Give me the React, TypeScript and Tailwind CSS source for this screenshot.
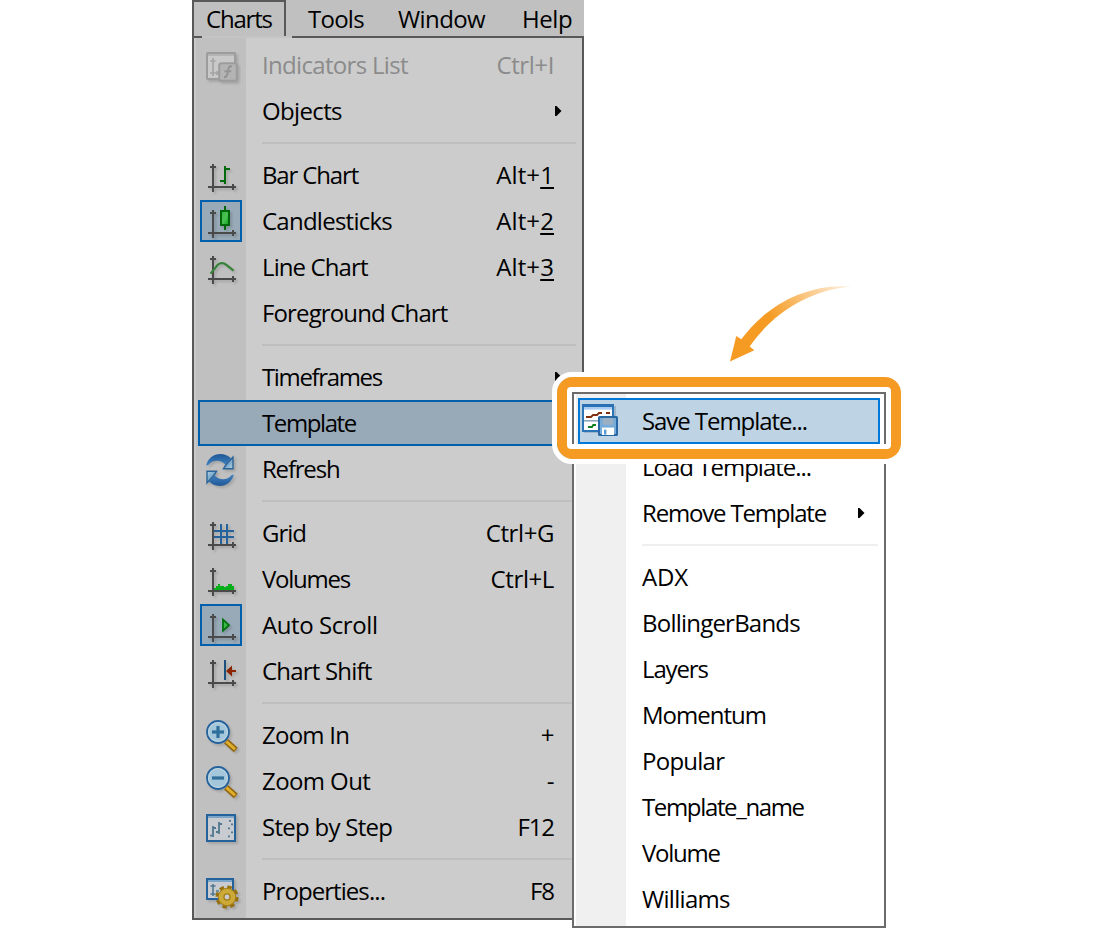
import React from 'react';
import clsx from 'clsx';

type Entry = {
  label?: string;
  track?: string;
  keys?: string;
  keysTrack?: string;
  hotkey?: string;
  icon?: React.ReactNode;
  disabled?: boolean;
  checked?: boolean;
  arrow?: boolean;
  active?: boolean;
};

const AXIS = '#4a4a4a';

const Icon: React.FC<{ children: React.ReactNode; flat?: boolean }> = ({ children, flat }) => (
  <svg
    width="36"
    height="36"
    viewBox="0 0 18 18"
    className={clsx('block overflow-visible', !flat && 'drop-shadow-[2px_2px_1px_rgba(0,0,0,0.14)]')}
  >
    {children}
  </svg>
);

const Axes = () => (
  <path d="M3 2h1v14H3zM2 3h3v1H2zM1 13h14v1H1zM13 12h1v3h-1z" fill={AXIS} shapeRendering="crispEdges" />
);

const IndicatorsIcon = () => (
  <Icon>
    <g transform="translate(0 1)">
      <rect x="0.5" y="0.5" width="14" height="13" rx="0.4" fill="#c9c9c9" stroke="#9c9c9c" />
      <path d="M1 1.5h13" stroke="#b4b4b4" />
      <path d="M3.5 3v9M2.2 4.5h2.6M2 10.5h4.5M5.5 9.5v2" stroke="#a4a4a4" strokeWidth="0.8" fill="none" />
      <rect x="6.6" y="5.6" width="8.8" height="8.8" rx="1.2" fill="#b4b4b4" stroke="#9c9c9c" />
      <path d="M13 7.2c-1.8-.4-1.8 1-2 2.4s-.3 3-2 3M9.2 9.6h3.4" stroke="#949494" fill="none" />
    </g>
  </Icon>
);

const BarIcon = () => (
  <Icon>
    <Axes />
    <path d="M9 3h1v9H9zM10 4h2v1h-2zM7 10h2v1H7z" fill="#006a0c" shapeRendering="crispEdges" />
  </Icon>
);

const CandleIcon = () => (
  <Icon>
    <defs>
      <linearGradient id="candle" x1="0" y1="0" x2="1" y2="1">
        <stop offset="0" stopColor="#2fb03a" />
        <stop offset="0.5" stopColor="#4cc255" />
        <stop offset="1" stopColor="#08a018" />
      </linearGradient>
    </defs>
    <Axes />
    <path d="M9 0h1v12H9z" fill="#00680a" shapeRendering="crispEdges" />
    <rect x="7.5" y="2.5" width="4" height="7" fill="url(#candle)" stroke="#00680a" shapeRendering="crispEdges" />
  </Icon>
);

const LineIcon = () => (
  <Icon>
    <Axes />
    <path d="M2.3 10.8L6 6.3C7 5.3 9 5.3 10 6.3L13.8 9.3" stroke="#358238" strokeWidth="1.1" fill="none" />
  </Icon>
);

const RefreshIcon = () => (
  <Icon>
    <defs>
      <linearGradient id="crescent" x1="0" y1="0" x2="0" y2="1">
        <stop offset="0" stopColor="#1f5896" />
        <stop offset="1" stopColor="#3f80c0" />
      </linearGradient>
      <linearGradient id="head" x1="0.2" y1="0.2" x2="0.8" y2="0.9">
        <stop offset="0" stopColor="#4484b8" />
        <stop offset="1" stopColor="#a4c6da" />
      </linearGradient>
    </defs>
    {['rotate(0 7 8)', 'rotate(180 7 8)'].map((t) => (
      <g key={t} transform={t}>
        <path d="M.1 5.6C1 2.2 3.7 0 7.2 0c2.2 0 4 .8 5.3 2.2L9.6 5.2C7.8 2.9 3.5 2.4 1 5.6z" fill="url(#crescent)" />
        <path d="M13.5 1.5v5.9H8.7l1.3-2z" fill="url(#head)" stroke="#2c6498" strokeWidth="0.7" />
      </g>
    ))}
  </Icon>
);

const GridIcon = () => (
  <Icon>
    <Axes />
    <path d="M7 3h1v10H7zM10 3h1v10h-1zM4 6h10v1H4zM4 9h10v1H4z" fill="#24629c" shapeRendering="crispEdges" />
  </Icon>
);

const VolumesIcon = () => (
  <Icon>
    <Axes />
    <path d="M4 13v-1h1v-1h1v-1h1v1h2v.5h1V11h1v-1h2v1h1v2z" fill="#06ae1a" shapeRendering="crispEdges" />
  </Icon>
);

const AutoScrollIcon = () => (
  <Icon>
    <Axes />
    <path d="M8.5 4.8v5.6L11.5 7.6z" fill="#3cb848" stroke="#00700e" strokeWidth="0.9" />
  </Icon>
);

const ShiftIcon = () => (
  <Icon>
    <Axes />
    <path d="M9 2h1v10H9z" fill="#1c4f7c" shapeRendering="crispEdges" />
    <path d="M10 7.5l3-2.7v2.2h2v1h-2v2.2z" fill="#8c2400" />
  </Icon>
);

const ZoomIcon: React.FC<{ plus?: boolean }> = ({ plus }) => (
  <Icon>
    <path d="M10 10.6l4.9 4.4" stroke="#946610" strokeWidth="3" />
    <path d="M10.2 10.8l4.3 3.8" stroke="#dfb02c" strokeWidth="1.4" />
    <circle cx="6" cy="6" r="5.5" fill="#a4c6da" stroke="#24629c" strokeWidth="0.9" />
    <circle cx="6" cy="6" r="4.7" fill="none" stroke="#c4d8e4" strokeWidth="0.5" />
    <path d="M3 5.2h6v1.6H3z" fill="#2f6f9c" />
    {plus && <path d="M5.2 3h1.6v6H5.2z" fill="#2f6f9c" />}
  </Icon>
);

const StepIcon = () => (
  <Icon>
    <rect x="0.5" y="1.5" width="14" height="13" fill="#c8ccd0" stroke="#24629c" />
    <path d="M1 2h13v1H1z" fill="#7ca4c8" />
    <path d="M3.5 7v5.5M2 11.8h1.5M6.5 5v6M5 10h1.5M3.5 8H5M6.5 6H8" stroke="#527890" strokeWidth="0.9" />
    <path d="M11.5 4.4h1M12.5 6.2h1M11 8.2h1M12.5 10.2h1M11 12.2h1" stroke="#527890" strokeWidth="0.9" />
  </Icon>
);

const PropertiesIcon = () => (
  <Icon>
    <rect x="0.5" y="1.5" width="13" height="10" fill="#c8ccd0" stroke="#24629c" />
    <path d="M1 2h12v1H1z" fill="#7aa6cc" />
    <path d="M3.5 4v6M2.2 5h2.6M2.2 9h2.6M5 7.5h1.5" stroke="#527890" strokeWidth="0.8" />
    <circle cx="10.5" cy="10.5" r="4.9" fill="none" stroke="#94700f" strokeWidth="1.8" strokeDasharray="2.2 1.648" />
    <circle cx="10.5" cy="10.5" r="2.9" fill="#c8ccce" stroke="#a37c18" strokeWidth="3.4" />
    <circle cx="10.5" cy="10.5" r="3" fill="none" stroke="#ccaa38" strokeWidth="2.3" />
  </Icon>
);

const SaveIcon = () => (
  <Icon flat>
    <path d="M1 1h16v13.5H1z" fill="#6c8ca8" opacity="0.4" />
    <rect x="0.5" y="0.5" width="15" height="13" fill="#fff" stroke="#2c74b8" />
    <path d="M0 0h16v1.5H0z" fill="#2c70b4" />
    <path d="M1 1.5h14v1.3H1z" fill="#a8ccf4" />
    <path d="M1 8h14v.8H1z" fill="#90a8bc" />
    <path d="M2 6.5h2.5l1-1h2l1-1H10M12 4.5h2" stroke="#803010" strokeWidth="0.9" fill="none" />
    <path d="M3 11.5h2l.6-1H7" stroke="#108020" strokeWidth="0.9" fill="none" />
    <rect x="8.5" y="6.5" width="9" height="9" rx="0.3" fill="#78acd8" stroke="#2868a4" />
    <rect x="10.5" y="7" width="5" height="3.3" fill="#9cb0c4" />
    <rect x="10" y="11.8" width="6" height="3.7" fill="#fff" />
    <rect x="11" y="12.8" width="1.2" height="2.5" fill="#5c9cd4" />
  </Icon>
);

const menuBar = [
  { label: 'Charts', box: 'w-[94px] border-2 border-b-0 border-[#585858] pl-[12px] leading-[34px] tracking-[-1.2px]' },
  { label: 'Tools', box: 'w-[90px] pl-[22px] tracking-[-0.75px]' },
  { label: 'Window', box: 'w-[124px] pl-[22px] tracking-[-0.6px]' },
  { label: 'Help', box: 'pl-[22px] tracking-[-0.4px]' },
];

const mainItems: Entry[] = [
  { label: 'Indicators List', track: 'tracking-[-0.68px]', keys: 'Ctrl+I', disabled: true, icon: <IndicatorsIcon /> },
  { label: 'Objects', track: 'tracking-[-0.65px]', arrow: true },
  {},
  { label: 'Bar Chart', track: 'tracking-[-1.15px]', keys: 'Alt+', keysTrack: 'tracking-[0.1px]', hotkey: '1', icon: <BarIcon /> },
  { label: 'Candlesticks', track: 'tracking-[-0.75px]', keys: 'Alt+', keysTrack: 'tracking-[0.1px]', hotkey: '2', checked: true, icon: <CandleIcon /> },
  { label: 'Line Chart', track: 'tracking-[-0.9px]', keys: 'Alt+', keysTrack: 'tracking-[0.1px]', hotkey: '3', icon: <LineIcon /> },
  { label: 'Foreground Chart', track: 'tracking-[-0.86px]' },
  {},
  { label: 'Timeframes', track: 'tracking-[-1.35px]', arrow: true },
  { label: 'Template', track: 'tracking-[-1.4px]', active: true },
  { label: 'Refresh', track: 'tracking-[-1.2px]', icon: <RefreshIcon /> },
  {},
  { label: 'Grid', track: 'tracking-[-1px]', keys: 'Ctrl+G', icon: <GridIcon /> },
  { label: 'Volumes', track: 'tracking-[-1.25px]', keys: 'Ctrl+L', icon: <VolumesIcon /> },
  { label: 'Auto Scroll', track: 'tracking-[-0.42px]', checked: true, icon: <AutoScrollIcon /> },
  { label: 'Chart Shift', track: 'tracking-[-0.8px]', icon: <ShiftIcon /> },
  {},
  { label: 'Zoom In', track: 'tracking-[-0.75px]', keys: '+', icon: <ZoomIcon plus /> },
  { label: 'Zoom Out', track: 'tracking-[-0.6px]', keys: '-', icon: <ZoomIcon /> },
  { label: 'Step by Step', track: 'tracking-[-0.72px]', keys: 'F12', keysTrack: 'tracking-[-1.1px]', icon: <StepIcon /> },
  {},
  { label: 'Properties...', track: 'tracking-[-0.93px]', keys: 'F8', keysTrack: 'tracking-[-1px]', icon: <PropertiesIcon /> },
];

const subItems: Entry[] = [
  { label: 'Save Template...', track: 'tracking-[-1.07px]', active: true, icon: <SaveIcon /> },
  { label: 'Load Template...', track: 'tracking-[-1px]' },
  { label: 'Remove Template', track: 'tracking-[-1.18px]', arrow: true },
  {},
  { label: 'ADX', track: 'tracking-[-0.2px]' },
  { label: 'BollingerBands', track: 'tracking-[-0.78px]' },
  { label: 'Layers', track: 'tracking-[-1.15px]' },
  { label: 'Momentum', track: 'tracking-[-1px]' },
  { label: 'Popular', track: 'tracking-[-0.75px]' },
  { label: 'Template_name', track: 'tracking-[-1.35px]' },
  { label: 'Volume', track: 'tracking-[-1.25px]' },
  { label: 'Williams', track: 'tracking-[-0.7px]' },
];

const Arrow = () => (
  <svg width="7" height="10" viewBox="0 0 7 10" className="block">
    <path d="M0 0h1.5l5 5-5 5H0z" fill="#000" />
  </svg>
);

const MainRow: React.FC<{ item: Entry }> = ({ item }) => {
  if (!item.label) {
    return (
      <div className="flex h-[18px] items-center pr-[6px] pl-[68px]">
        <div className="h-[2px] w-full bg-[#bfbfbf]" />
      </div>
    );
  }
  return (
    <div
      className={clsx(
        'ml-[4px] flex h-[46px] border-2 pr-[18px]',
        item.active ? 'border-[#0060ae] bg-[#98a9b7]' : 'border-transparent',
        item.disabled ? 'text-[#8b8b8b]' : 'text-black'
      )}
    >
      <div
        className={clsx(
          'h-[42px] w-[42px] shrink-0 border-2',
          item.checked ? 'border-[#0060ae] bg-[#98a9b7]' : 'border-transparent'
        )}
      >
        <div className="pt-[4px] pl-[4px]">{item.icon}</div>
      </div>
      <span className={clsx('ml-[20px] leading-[42px]', item.track)}>{item.label}</span>
      <span className={clsx('ml-auto pr-[8px] leading-[42px]', item.keysTrack ?? 'tracking-[-0.4px]')}>
        {item.keys}
        {item.hotkey && <span className="underline decoration-2 underline-offset-[3px]">{item.hotkey}</span>}
      </span>
      {item.arrow && (
        <span className="flex items-center">
          <Arrow />
        </span>
      )}
    </div>
  );
};

const SubRow: React.FC<{ item: Entry }> = ({ item }) => {
  if (!item.label) {
    return (
      <div className="flex h-[18px] items-center pr-[2px] pl-[64px]">
        <div className="h-[2px] w-full bg-[#efefef]" />
      </div>
    );
  }
  return (
    <div
      className={clsx(
        'flex h-[46px] w-[302px] border-2 pr-[13px]',
        item.active ? 'border-[#0078d7] bg-[#bed3e4]' : 'border-transparent'
      )}
    >
      <div className="w-[62px] shrink-0 pt-[4px] pl-[2px]">{item.icon}</div>
      <span className={clsx('leading-[42px]', item.track)}>{item.label}</span>
      {item.arrow && (
        <span className="ml-auto flex items-center">
          <Arrow />
        </span>
      )}
    </div>
  );
};

const App: React.FC = () => {
  return (
    <div className="relative h-[928px] w-[1100px] overflow-hidden bg-white font-['Open_Sans',sans-serif] text-[24px] text-black">
      <div className="ml-[192px] flex w-[392px] flex-col">
        {/* Menu bar */}
        <div className="flex h-[36px] bg-[#c0c0c0] leading-[38px]">
          {menuBar.map((m) => (
            <div key={m.label} className={m.box}>
              {m.label}
            </div>
          ))}
        </div>
        <div className="flex h-[2px] justify-between bg-[#c4c4c4]">
          <div className="w-[10px] bg-[#585858]" />
          <div className="w-[292px] bg-[#585858]" />
        </div>

        {/* Charts menu */}
        <div className="h-[882px] border-2 border-t-0 border-[#585858] bg-[linear-gradient(to_right,#c9c9c9_2px,#c0c0c0_2px,#c0c0c0_52px,#cccccc_52px)] pt-[4px]">
          {mainItems.map((item, i) => (
            <MainRow key={i} item={item} />
          ))}
        </div>
      </div>

      {/* Template submenu */}
      <div className="absolute top-[392px] left-[572px] h-[536px] w-[314px] border-2 border-[#6b6b6b] bg-[linear-gradient(to_right,#ffffff_2px,#f0f0f0_2px,#f0f0f0_52px,#ffffff_52px)] pt-[4px] pr-[4px] pl-[4px]">
        {subItems.map((item, i) => (
          <SubRow key={i} item={item} />
        ))}
      </div>

      {/* Highlight ring */}
      <div className="absolute top-[372px] left-[552px] h-[92px] w-[354px] rounded-[20px] border-[5px] border-white">
        <div className="h-full rounded-[16px] border-[10px] border-[#f59b23]">
          <div className="h-full rounded-[4px] border-[5px] border-white" />
        </div>
      </div>
      <svg className="absolute top-[280px] left-[724px]" width="130" height="90" viewBox="0 0 130 90">
        <defs>
          <linearGradient id="swoosh" x1="128" y1="6" x2="50" y2="45" gradientUnits="userSpaceOnUse">
            <stop offset="0" stopColor="#f59b23" stopOpacity="0.1" />
            <stop offset="1" stopColor="#f59b23" />
          </linearGradient>
        </defs>
        <path d="M6 81.5L12.3 56l5 3.3C38 31 76 3 128 6.500 84 10 48 34 25.7 66.6l4.6 3.7z" fill="url(#swoosh)" />
      </svg>
    </div>
  );
};

export default App;
